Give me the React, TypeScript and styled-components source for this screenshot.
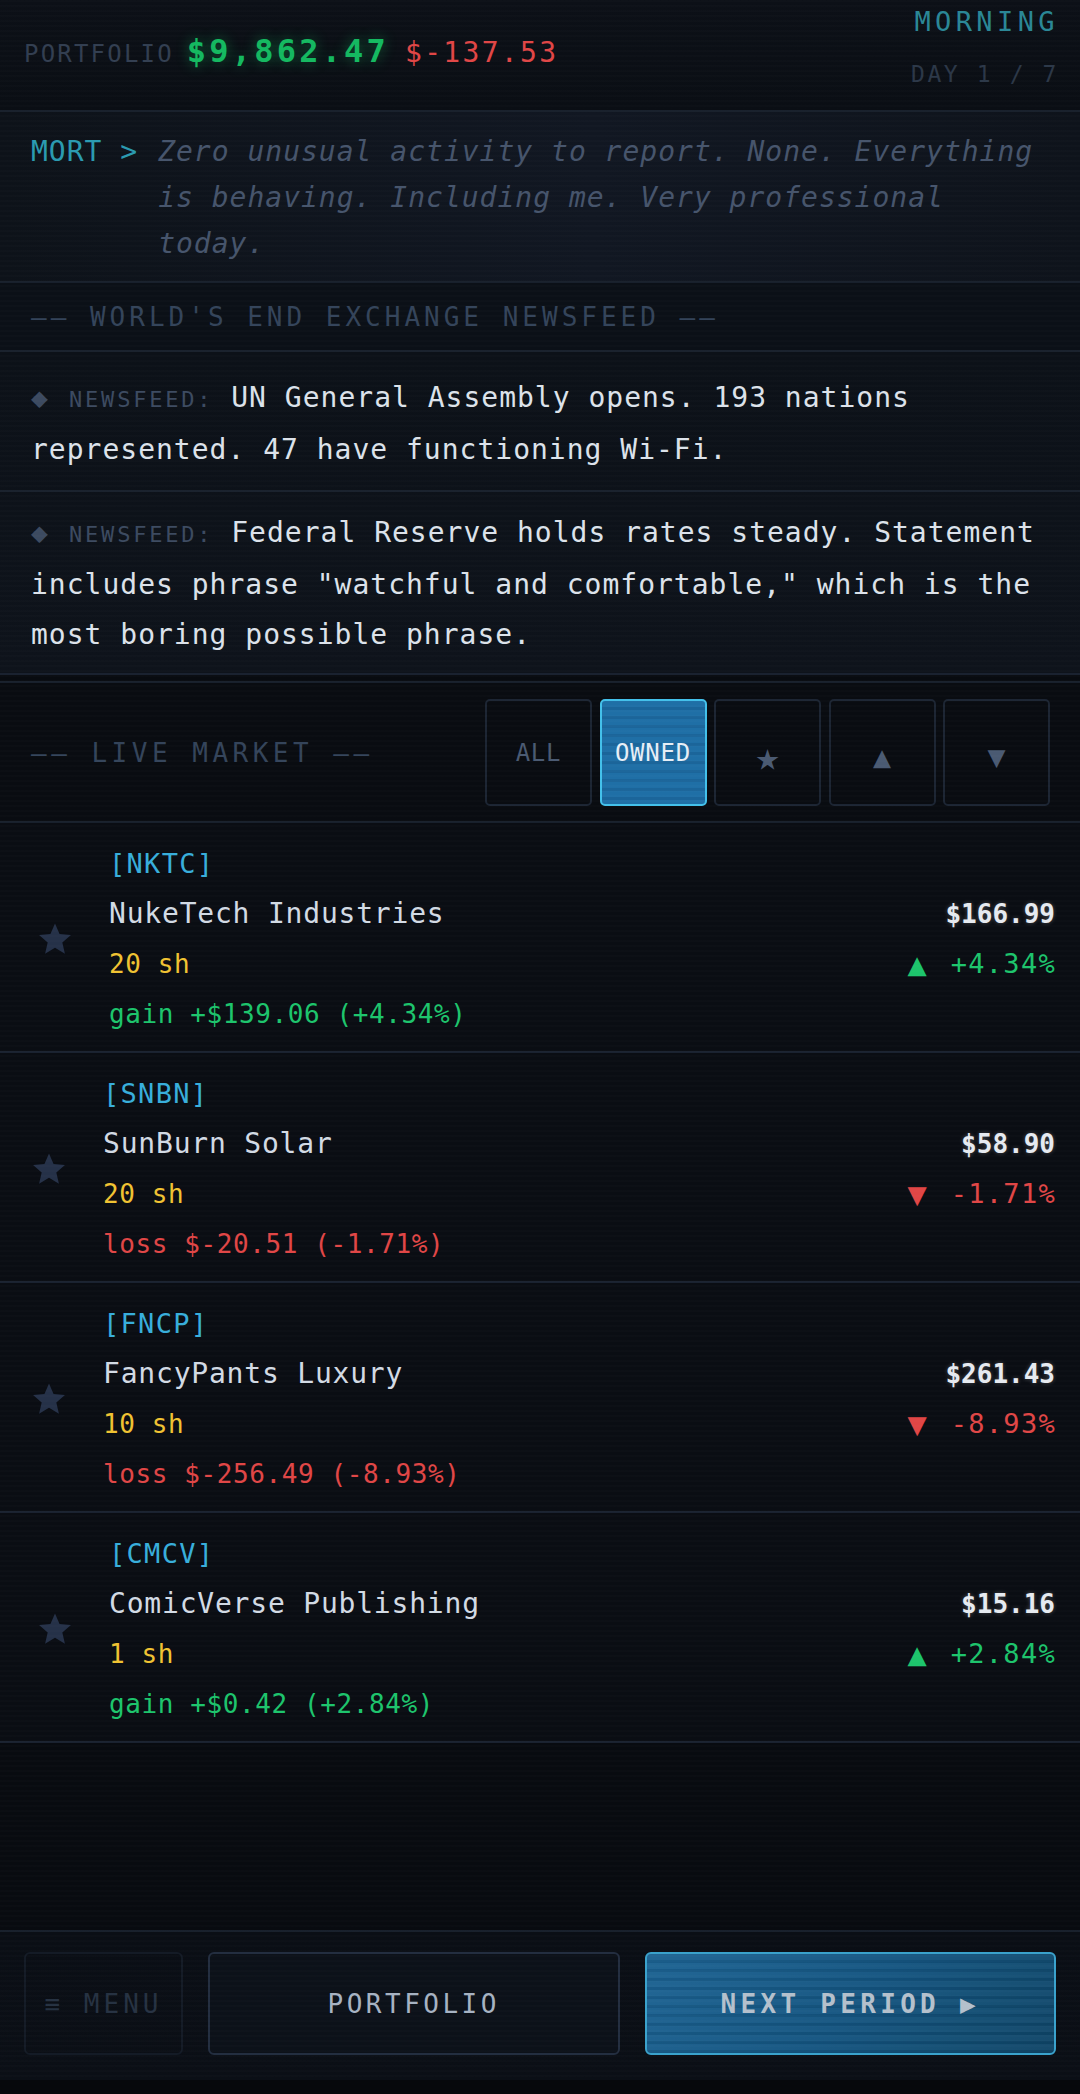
import styled, { createGlobalStyle } from 'styled-components';

const GlobalStyle = createGlobalStyle`
  html, body {
    margin: 0;
    padding: 0;
    background: #06080c;
  }
  body {
    font-family: 'DejaVu Sans Mono', 'Liberation Mono', monospace;
  }
  * {
    box-sizing: border-box;
  }
`;

type Stock = {
  ticker: string;
  name: string;
  price: string;
  change: string;
  shares: string;
  result: string;
  up: boolean;
  shift?: boolean;
};

const stocks: Stock[] = [
  { ticker: 'NKTC', name: 'NukeTech Industries', price: '$166.99', change: '+4.34%', shares: '20 sh', result: 'gain +$139.06 (+4.34%)', up: true, shift: true },
  { ticker: 'SNBN', name: 'SunBurn Solar', price: '$58.90', change: '-1.71%', shares: '20 sh', result: 'loss $-20.51 (-1.71%)', up: false },
  { ticker: 'FNCP', name: 'FancyPants Luxury', price: '$261.43', change: '-8.93%', shares: '10 sh', result: 'loss $-256.49 (-8.93%)', up: false },
  { ticker: 'CMCV', name: 'ComicVerse Publishing', price: '$15.16', change: '+2.84%', shares: '1 sh', result: 'gain +$0.42 (+2.84%)', up: true, shift: true },
];

const news = [
  'UN General Assembly opens. 193 nations represented. 47 have functioning Wi-Fi.',
  'Federal Reserve holds rates steady. Statement includes phrase "watchful and comfortable," which is the most boring possible phrase.',
];

const filters = ['ALL', 'OWNED', '★', '▲', '▼'];

const GREEN = '#1dc46c';
const RED = '#e04646';

function App() {
  return (
    <>
      <GlobalStyle />
      <Screen>
        <TopBar>
          <Balance>
            <BalanceLabel>PORTFOLIO</BalanceLabel>
            <BalanceValue>$9,862.47</BalanceValue>
            <BalanceDelta>$-137.53</BalanceDelta>
          </Balance>
          <Clock>
            <Phase>MORNING</Phase>
            <DayCount>DAY 1 / 7</DayCount>
          </Clock>
        </TopBar>

        <MortPanel>
          <MortTag>MORT &gt;</MortTag>
          <MortSays>Zero unusual activity to report. None. Everything is behaving. Including me. Very professional today.</MortSays>
        </MortPanel>

        <SectionTitle>—— WORLD'S END EXCHANGE NEWSFEED ——</SectionTitle>

        <NewsList>
          {news.map((n) => (
            <NewsItem key={n}>
              <NewsDiamond>◆</NewsDiamond>
              <NewsLabel>NEWSFEED:</NewsLabel> {n}
            </NewsItem>
          ))}
        </NewsList>

        <MarketBar>
          <MarketTitle>—— LIVE MARKET ——</MarketTitle>
          <Filters>
            {filters.map((f) => (
              <FilterButton key={f} $active={f === 'OWNED'} $glyph={f.length === 1} $star={f === '★'}>
                {f}
              </FilterButton>
            ))}
          </Filters>
        </MarketBar>

        <StockList>
          {stocks.map((s) => (
            <StockRow key={s.ticker} $shift={s.shift}>
              <WatchStar viewBox="0 0 24 24">
                <path d="M12 1.6l3.05 7.02 7.6.68-5.76 5.02 1.72 7.46L12 17.86l-6.61 3.92 1.72-7.46L1.35 9.3l7.6-.68z" />
              </WatchStar>
              <StockInfo>
                <Ticker>[{s.ticker}]</Ticker>
                <StockName>{s.name}</StockName>
                <Shares>{s.shares}</Shares>
                <Result $up={s.up}>{s.result}</Result>
              </StockInfo>
              <Quote>
                <Price>{s.price}</Price>
                <Change $up={s.up}>
                  <Arrow>{s.up ? '▲' : '▼'}</Arrow>
                  {s.change}
                </Change>
              </Quote>
            </StockRow>
          ))}
        </StockList>

        <Filler />

        <BottomBar>
          <MenuButton>≡ MENU</MenuButton>
          <PortfolioButton>PORTFOLIO</PortfolioButton>
          <NextButton>NEXT PERIOD ▶</NextButton>
        </BottomBar>
      </Screen>
    </>
  );
}
export default App;

const Screen = styled.div`
  position: relative;
  width: 1080px;
  min-height: 2080px;
  display: flex;
  flex-direction: column;
  background: #080b10;
  overflow: hidden;

  &::after {
    content: '';
    position: absolute;
    inset: 0;
    pointer-events: none;
    background: repeating-linear-gradient(
      to bottom,
      rgba(255, 255, 255, 0.012) 0px,
      rgba(255, 255, 255, 0.012) 2px,
      transparent 2px,
      transparent 5px
    );
  }
`;

/* top bar */
const TopBar = styled.header`
  height: 112px;
  display: flex;
  justify-content: space-between;
  align-items: flex-start;
  padding: 0 24px;
  background: linear-gradient(180deg, #0c1017 0%, #0a0e14 100%);
  border-bottom: 2px solid #171f2b;
`;

const Balance = styled.div`
  display: flex;
  align-items: baseline;
  margin-top: 31px;
  line-height: 40px;
`;

const BalanceLabel = styled.span`
  font-size: 24px;
  letter-spacing: 2.2px;
  color: #323e50;
  margin-right: 13px;
`;

const BalanceValue = styled.span`
  font-size: 32px;
  font-weight: 700;
  letter-spacing: 3.2px;
  color: #14b860;
  text-shadow: 0 0 14px rgba(20, 200, 100, 0.45);
  margin-right: 16px;
`;

const BalanceDelta = styled.span`
  font-size: 28px;
  letter-spacing: 2.3px;
  color: ${RED};
`;

const Clock = styled.div`
  display: flex;
  flex-direction: column;
  align-items: flex-end;
  gap: 22px;
  margin-top: 7px;
  line-height: 30px;
`;

const Phase = styled.span`
  font-size: 27px;
  letter-spacing: 4.4px;
  margin-right: -3px;
  color: #2a8796;
`;

const DayCount = styled.span`
  font-size: 23px;
  letter-spacing: 2.6px;
  margin-right: -3px;
  color: #2b3747;
`;

/* mort */
const MortPanel = styled.section`
  display: flex;
  gap: 20px;
  padding: 17px 30px 14px 31px;
  background: linear-gradient(90deg, #0d1219 0%, #111722 55%, #0e131b 100%);
  border-bottom: 2px solid #18202c;
  font-size: 28px;
  line-height: 46px;
  letter-spacing: 1px;
`;

const MortTag = styled.span`
  flex-shrink: 0;
  color: #2a9ab0;
`;

const MortSays = styled.p`
  margin: 0;
  flex: 1;
  font-style: italic;
  color: #46546b;
`;

/* newsfeed */
const SectionTitle = styled.h2`
  margin: 0;
  padding: 22px 31px 21px;
  font-size: 26px;
  font-weight: 400;
  line-height: 24px;
  letter-spacing: 4px;
  white-space: nowrap;
  color: #34445a;
  background: #0b1017;
  border-bottom: 2px solid #18202c;
`;

const NewsList = styled.div`
  padding-top: 5px;
  background: linear-gradient(180deg, #0c1118 0%, #0e131b 100%);
  border-bottom: 2px solid #1a2230;
`;

const NewsItem = styled.p`
  margin: 0;
  padding: 16px 30px 15px 31px;
  font-size: 28px;
  line-height: 50px;
  letter-spacing: 1px;
  color: #dce2ea;
  border-bottom: 2px solid #18202c;

  &:last-child {
    border-bottom: none;
    padding-bottom: 13px;
  }
`;

const NewsDiamond = styled.span`
  display: inline-block;
  width: 26px;
  margin-right: 12px;
  font-size: 28px;
  letter-spacing: 0;
  color: #3c4a60;
`;

const NewsLabel = styled.span`
  font-size: 22px;
  letter-spacing: 2.8px;
  color: #3c4a60;
`;

/* market */
const MarketBar = styled.div`
  margin-top: 6px;
  display: flex;
  align-items: center;
  justify-content: space-between;
  padding: 16px 30px 15px 31px;
  background: #090c11;
  border-top: 2px solid #18202c;
  border-bottom: 2px solid #18202c;
`;

const MarketTitle = styled.span`
  font-size: 26px;
  letter-spacing: 4.5px;
  color: #34445a;
  white-space: nowrap;
`;

const Filters = styled.div`
  display: flex;
  gap: 7.5px;
`;

const FilterButton = styled.button<{ $active?: boolean; $glyph?: boolean; $star?: boolean }>`
  width: 107px;
  height: 107px;
  display: flex;
  align-items: center;
  justify-content: center;
  padding: 0;
  padding-top: ${(p) => (p.$star ? '6px' : p.$glyph ? '8px' : '0')};
  border-radius: 5px;
  font-family: inherit;
  font-size: ${(p) => (p.$star ? '40px' : p.$glyph ? '30px' : '24px')};
  letter-spacing: ${(p) => (p.$glyph ? '0' : '0.8px')};
  color: ${(p) => (p.$active ? '#e6eef6' : '#4a5a72')};
  border: 2px solid ${(p) => (p.$active ? '#43c0ea' : '#1c2533')};
  background: ${(p) =>
    p.$active
      ? 'repeating-linear-gradient(180deg, #1f6fa6 0px, #1f6fa6 6px, #1b659a 6px, #1b659a 9px)'
      : '#090c11'};
`;

const StockList = styled.div`
  display: flex;
  flex-direction: column;
  background: #0a0d13;
`;

const StockRow = styled.div<{ $shift?: boolean }>`
  display: flex;
  align-items: center;
  padding: 16px 25px 12px ${(p) => (p.$shift ? '37px' : '31px')};
  border-bottom: 2px solid #1a2230;
`;

const WatchStar = styled.svg`
  width: 36px;
  height: 36px;
  flex-shrink: 0;
  margin-right: 36px;
  fill: #253148;
`;

const StockInfo = styled.div`
  flex: 1;
  display: flex;
  flex-direction: column;
  line-height: 50px;
`;

const Ticker = styled.span`
  font-size: 27px;
  letter-spacing: 1.3px;
  color: #38aedb;
`;

const StockName = styled.span`
  font-size: 28px;
  letter-spacing: 0.8px;
  color: #d2dae4;
`;

const Shares = styled.span`
  font-size: 26px;
  letter-spacing: 0.6px;
  color: #f0c232;
`;

const Result = styled.span<{ $up: boolean }>`
  font-size: 26px;
  letter-spacing: 0.6px;
  color: ${(p) => (p.$up ? GREEN : RED)};
`;

const Quote = styled.div`
  display: flex;
  flex-direction: column;
  align-items: flex-end;
  line-height: 50px;
`;

const Price = styled.span`
  font-size: 26px;
  font-weight: 700;
  color: #e6eaf0;
  text-shadow: 0 0 4px rgba(255, 255, 255, 0.25);
`;

const Change = styled.span<{ $up: boolean }>`
  display: flex;
  align-items: center;
  font-size: 27px;
  letter-spacing: 1.3px;
  margin-right: -1px;
  color: ${(p) => (p.$up ? GREEN : RED)};
`;

const Arrow = styled.span`
  font-size: 32px;
  letter-spacing: 0;
  margin-right: 24px;
`;

const Filler = styled.div`
  flex: 1;
  background: #080b10;
`;

/* bottom */
const BottomBar = styled.footer`
  display: flex;
  gap: 25px;
  padding: 20px 24px 25px;
  background: linear-gradient(180deg, #0a0e15 0%, #0b0f16 100%);
  border-top: 2px solid #161e2a;
`;

const BarButton = styled.button`
  height: 103px;
  display: flex;
  align-items: center;
  justify-content: center;
  padding: 0;
  border-radius: 6px;
  font-family: inherit;
  font-size: 26px;
`;

const MenuButton = styled(BarButton)`
  width: 159px;
  letter-spacing: 4px;
  color: #263242;
  background: transparent;
  border: 2px solid #141b26;
`;

const PortfolioButton = styled(BarButton)`
  flex: 1;
  letter-spacing: 3.5px;
  color: #a6b2c2;
  background: #0c1119;
  border: 2px solid #232e40;
`;

const NextButton = styled(BarButton)`
  flex: 1;
  font-weight: 700;
  letter-spacing: 4.3px;
  color: #b4c0cc;
  border: 2px solid #3aa2cc;
  background: repeating-linear-gradient(
      180deg,
      rgba(255, 255, 255, 0.03) 0px,
      rgba(255, 255, 255, 0.03) 6px,
      rgba(0, 0, 0, 0.06) 6px,
      rgba(0, 0, 0, 0.06) 9px
    ),
    linear-gradient(135deg, #1b6292 0%, #135480 50%, #0e4466 100%);
`;
